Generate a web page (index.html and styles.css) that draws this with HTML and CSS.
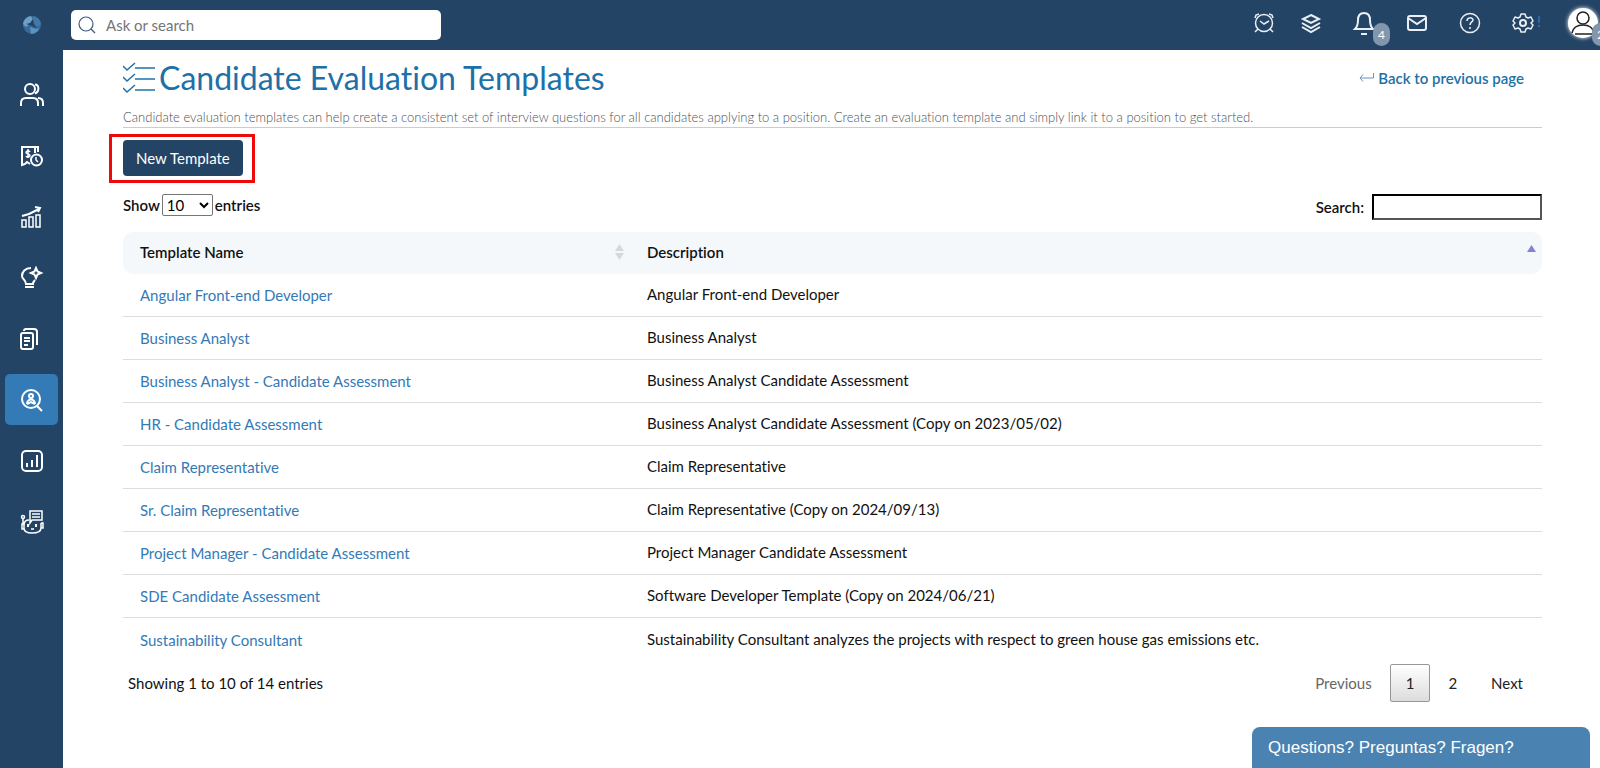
FILE: index.html
```
<!DOCTYPE html>
<html lang="en">

<head>
    <meta charset="UTF-8">
    <meta name="viewport" content="width=device-width, initial-scale=1.0">
    <title>Candidate Evaluation Templates</title>
    <link rel="stylesheet" href="styles.css">
</head>

<body>
    <header class="topbar">
        <a class="logo" href="#" aria-label="Home">
            <svg width="20" height="20" viewBox="0 0 20 20">
                <circle cx="10" cy="10" r="9" fill="#376a9b" />
                <path d="M1 9a9 9 0 0 1 8-8l2 4-3 4-4 3z" fill="#6d9fc8" />
                <path d="M11 1a9 9 0 0 1 8 8l-4 3-4-4z" fill="#4478a6" />
                <path d="M4 9l4-1 3-4 1 5 3 4-5-2z" fill="#244466" />
                <path d="M8 12l6 2 3-1a9 9 0 0 1-8 6z" fill="#5d93bf" />
            </svg>
        </a>
        <form class="ask">
            <svg width="18" height="18" viewBox="0 0 18 18" fill="none" stroke="#3f5a7c" stroke-width="1.2">
                <circle cx="8" cy="8" r="7" />
                <path d="M13 13l4 4" />
            </svg>
            <input class="ask-input" type="text" placeholder="Ask or search" aria-label="Ask or search">
        </form>
        <div class="tools">
            <button class="tool tool-clock" type="button" aria-label="Reminders">
                <svg width="22" height="22" viewBox="0 0 22 22">
                    <circle cx="11" cy="11" r="8.500" />
                    <path d="M7 9l4 3 5-3M2 6l1-3 3-1M20 6l-1-3-3-1M5 17l-3 3M17 17l3 3" />
                </svg>
            </button>
            <button class="tool" type="button" aria-label="Layers">
                <svg width="22" height="22" viewBox="0 0 22 22">
                    <path d="M11 3l8 4-8 4-8-4z" stroke-width="2" />
                    <path d="M2 11l9 5 9-5M2 15l9 5 9-5" stroke-width="2" />
                </svg>
            </button>
            <button class="tool" type="button" aria-label="Notifications, 4 new">
                <svg width="24" height="26" viewBox="0 0 24 26" stroke-width="2">
                    <path d="M3 19h18c-2-2-3-4-3-9 0-4-2-7-6-7s-6 3-6 7c0 5-1 7-3 9z" />
                    <path d="M9 24h6" />
                </svg>
                <span class="badge">4</span>
            </button>
            <button class="tool" type="button" aria-label="Messages">
                <svg width="22" height="22" viewBox="0 0 22 22" stroke-width="2">
                    <rect x="2" y="4" width="18" height="14" rx="2" />
                    <path d="M2 6l9 6 9-6" />
                </svg>
            </button>
            <button class="tool" type="button" aria-label="Help">
                <svg width="22" height="22" viewBox="0 0 22 22">
                    <circle cx="11" cy="11" r="9.500" />
                    <path d="M8 9c0-4 6-4 6-1 0 2-3 2-3 5M11 15v2" />
                </svg>
            </button>
            <button class="tool" type="button" aria-label="Settings">
                <svg width="22" height="22" viewBox="0 0 22 22" stroke-linejoin="round">
                    <path d="M9 2h4l1 3 2 1 3-1 2 4-2 2 2 2-2 4-3-1-2 1-1 3H9l-1-3-2-1-3 1-2-4 2-2-2-2 2-4 3 1 2-1z" />
                    <circle cx="11" cy="11" r="3" stroke-width="2" />
                </svg>
                <span class="alert">!</span>
            </button>
            <button class="avatar" type="button" aria-label="Account">
                <svg width="28" height="28" viewBox="0 0 28 28" fill="none" stroke="#222" stroke-width="1.500">
                    <circle cx="14" cy="9" r="6" />
                    <path d="M3 24c1-5 5-8 11-8s10 3 11 8M6 25h17" />
                </svg>
                <span class="badge badge-account">2</span>
            </button>
        </div>
    </header>

    <div class="layout">
        <nav class="sidebar">
            <a class="side-link" href="#" aria-label="People">
                <svg width="24" height="24" viewBox="0 0 24 24" stroke-width="2">
                    <circle cx="10" cy="6" r="5" />
                    <path d="M1 23v-3c0-3 2-5 5-5h7c3 0 5 2 5 5v3M15 1.500c4 0 5 7 0 9M18 15c3 0 5 2 5 5v3" />
                </svg>
            </a>
            <a class="side-link" href="#" aria-label="Payroll">
                <svg width="24" height="24" viewBox="0 0 24 24">
                    <path d="M10 20l-3-2-2 2-3 1V3h16v5M2 3v17M15 3v6" stroke-width="2" />
                    <path d="M10 8c-1-2-4-1-4 .5s4 1.500 4 3-3 2.500-4 .5M8 5v9" />
                    <circle cx="16.500" cy="16" r="5.500" stroke-width="2" />
                    <path d="M16 13v3l2 2" />
                </svg>
            </a>
            <a class="side-link" href="#" aria-label="Performance">
                <svg width="24" height="24" viewBox="0 0 24 24">
                    <path d="M2 22v-7h4v7zM9 22V12h4v10zM16 22V10h4v12z" />
                    <path d="M2 11l7-2 10-5M15 2l5 1-2 4" stroke-width="2" />
                </svg>
            </a>
            <a class="side-link" href="#" aria-label="Ideas">
                <svg width="24" height="24" viewBox="0 0 24 24" stroke-width="2">
                    <path d="M11 2c-6 0-9 4-9 8 0 3 4 4 4 8h7c0-2 1-3 2-4M5 21h9" />
                    <path d="M16 2l1.500 3.500L21 7l-3.500 1.500L16 12l-1.500-3.500L11 7l3.500-1.500z" />
                </svg>
            </a>
            <a class="side-link" href="#" aria-label="Documents">
                <svg width="24" height="24" viewBox="0 0 24 24">
                    <rect x="1" y="6" width="12" height="16" rx="2" stroke-width="2" />
                    <path d="M4 4c0-1 1-2 2-2h8c2 0 3 1 3 3v13M4 11h6M4 14h6M4 18h4" stroke-width="2" />
                </svg>
            </a>
            <a class="side-link active" href="#" aria-label="Recruitment">
                <svg width="24" height="24" viewBox="0 0 24 24" stroke-width="2">
                    <circle cx="11" cy="11" r="9" />
                    <circle cx="11" cy="8" r="2" />
                    <path d="M7 16c0-6 8-6 8 0M7 16l4-2 4 2M17 18l5 5" />
                </svg>
            </a>
            <a class="side-link" href="#" aria-label="Reports">
                <svg width="24" height="24" viewBox="0 0 24 24" stroke-width="2">
                    <rect x="2" y="2" width="20" height="20" rx="4" />
                    <path d="M7 18v-4M12 18v-7M17 18V6" />
                </svg>
            </a>
            <a class="side-link" href="#" aria-label="Assistant">
                <svg width="26" height="26" viewBox="0 0 26 26">
                    <path d="M11 2h12v9H13l-2 3zM13 5h8M13 8h8" />
                    <circle cx="4" cy="8" r="1.500" />
                    <path d="M4 10v5M10 11c-3 0-5 2-5 5v3c0 4 3 5 8 5s9-1 9-5v-5M5 15H3v5h2M22 14h2v5h-2M12 20h3" />
                    <path d="M9 15v3M17 15v3" stroke-width="2" />
                </svg>
            </a>
        </nav>

        <main class="content">
            <div class="page-head">
                <h1>
                    <svg width="32" height="32" viewBox="0 0 32 32" fill="none" stroke="#2070a8" stroke-width="1.500">
                        <path d="M0 4l4 4 8-7M0 15l4 4 8-7M0 26l4 4 8-7" />
                        <path d="M12 6h20M12 17h20M12 28h20" />
                    </svg>
                    <span>Candidate Evaluation Templates</span>
                </h1>
                <a class="back" href="#">
                    <svg width="15" height="10" viewBox="0 0 15 10" fill="none" stroke="#6d92b8">
                        <path d="M14.500 0v5H1M4 1.500L1 5l3 3.500" />
                    </svg>
                    Back to previous page
                </a>
            </div>
            <p class="intro">Candidate evaluation templates can help create a consistent set of interview questions for all candidates applying to a position. Create an evaluation template and simply link it to a position to get started.</p>

            <div class="actions">
                <button class="new-template" type="button">New Template</button>
                <span class="highlight"></span>
            </div>

            <div class="filters">
                <div class="length">
                    <label for="entries">Show</label>
                    <select id="entries">
                        <option>10</option>
                        <option>25</option>
                        <option>50</option>
                    </select>
                    <span>entries</span>
                </div>
                <div class="search">
                    <label for="search">Search:</label>
                    <input id="search" type="search">
                </div>
            </div>

            <table>
                <thead>
                    <tr>
                        <th class="col-name">
                            <div class="sort">
                                Template Name
                                <svg width="9" height="16" viewBox="0 0 9 16" fill="#d6d9dc">
                                    <path d="M0 7l4.500-7L9 7zM0 9l4.500 7L9 9z" />
                                </svg>
                            </div>
                        </th>
                        <th>
                            <div class="sort">
                                Description
                                <svg width="9" height="16" viewBox="0 0 9 16" fill="#8580d8">
                                    <path d="M0 8l4.500-7L9 8z" />
                                </svg>
                            </div>
                        </th>
                    </tr>
                </thead>
                <tbody>
                    <tr>
                        <td><a href="#">Angular Front-end Developer</a></td>
                        <td>Angular Front-end Developer</td>
                    </tr>
                    <tr>
                        <td><a href="#">Business Analyst</a></td>
                        <td>Business Analyst</td>
                    </tr>
                    <tr>
                        <td><a href="#">Business Analyst - Candidate Assessment</a></td>
                        <td>Business Analyst Candidate Assessment</td>
                    </tr>
                    <tr>
                        <td><a href="#">HR - Candidate Assessment</a></td>
                        <td>Business Analyst Candidate Assessment (Copy on 2023/05/02)</td>
                    </tr>
                    <tr>
                        <td><a href="#">Claim Representative</a></td>
                        <td>Claim Representative</td>
                    </tr>
                    <tr>
                        <td><a href="#">Sr. Claim Representative</a></td>
                        <td>Claim Representative (Copy on 2024/09/13)</td>
                    </tr>
                    <tr>
                        <td><a href="#">Project Manager - Candidate Assessment</a></td>
                        <td>Project Manager Candidate Assessment</td>
                    </tr>
                    <tr>
                        <td><a href="#">SDE Candidate Assessment</a></td>
                        <td>Software Developer Template (Copy on 2024/06/21)</td>
                    </tr>
                    <tr>
                        <td><a href="#">Sustainability Consultant</a></td>
                        <td>Sustainability Consultant analyzes the projects with respect to green house gas emissions etc.</td>
                    </tr>
                </tbody>
            </table>

            <div class="table-foot">
                <span class="info">Showing 1 to 10 of 14 entries</span>
                <div class="pager">
                    <button class="page disabled" type="button">Previous</button>
                    <button class="page current" type="button">1</button>
                    <button class="page" type="button">2</button>
                    <button class="page" type="button">Next</button>
                </div>
            </div>
        </main>
    </div>

    <button class="chat" type="button">Questions? Preguntas? Fragen?</button>
</body>

</html>
```
FILE: styles.css
```
* {
    box-sizing: border-box;
}

body {
    margin: 0;
    min-height: 100vh;
    display: flex;
    flex-direction: column;
    font-family: Lato, sans-serif;
    font-size: 15px;
    line-height: 20px;
    font-variant-ligatures: none;
    color: #111;
    background-color: #fff;
    overflow-x: hidden;
}

button,
input,
select {
    font-family: inherit;
    font-size: inherit;
}

button {
    cursor: pointer;
}

a {
    color: #337ab7;
    text-decoration: none;
}

svg {
    flex: none;
}

/* top bar */
.topbar {
    display: flex;
    align-items: center;
    height: 50px;
    background-color: #244466;
}

.logo {
    display: flex;
    justify-content: center;
    width: 63px;
}

.ask {
    display: flex;
    align-items: center;
    gap: 10px;
    width: 370px;
    height: 30px;
    margin-left: 8px;
    padding: 0 7px;
    background-color: #fff;
    border-radius: 5px;
}

.ask-input {
    flex: 1;
    min-width: 0;
    padding: 0;
    border: 0;
    outline: 0;
}

.ask-input::placeholder {
    color: #757575;
}

.tools {
    display: flex;
    align-items: center;
    height: 50px;
    margin-left: auto;
    padding-bottom: 4px;
}

.tool {
    position: relative;
    display: flex;
    justify-content: center;
    width: 53px;
    padding: 0;
    border: 0;
    background: none;
    fill: none;
    stroke: #e9eff5;
    stroke-width: 1.5;
}

.tool-clock {
    width: 40px;
}

.badge {
    position: absolute;
    left: 36px;
    top: 13px;
    width: 17px;
    height: 23px;
    border-radius: 9px;
    font-size: 12px;
    line-height: 23px;
    text-align: center;
    color: #fff;
    background-color: #8296ad;
}

.alert {
    position: absolute;
    right: 8px;
    top: 0;
    color: #3a78b5;
}

.avatar {
    position: relative;
    display: flex;
    align-items: center;
    justify-content: center;
    width: 30px;
    height: 30px;
    margin: 0 2px 0 19px;
    padding: 0;
    border: 0;
    border-radius: 50%;
    background-color: #fff;
    box-shadow: 0 0 4px #fff;
}

.badge-account {
    left: 24px;
    top: 15px;
}

/* sidebar */
.layout {
    display: flex;
    flex: 1;
}

.sidebar {
    display: flex;
    flex: none;
    flex-direction: column;
    gap: 10px;
    width: 63px;
    padding: 19px 5px;
    background-color: #244466;
}

.side-link {
    display: flex;
    align-items: center;
    justify-content: center;
    height: 51px;
    border-radius: 5px;
    fill: none;
    stroke: #fff;
    stroke-width: 1.5;
}

.side-link.active {
    background-color: #337ab7;
}

/* content */
.content {
    flex: 1;
    min-width: 0;
    padding: 7px 58px 20px 60px;
}

.page-head {
    display: flex;
    align-items: center;
    justify-content: space-between;
    height: 42px;
}

h1 {
    display: flex;
    align-items: center;
    gap: 4px;
    margin: 0;
    font-size: 32px;
    line-height: 40px;
    font-weight: 400;
    color: #2070a8;
}

.back {
    display: flex;
    align-items: center;
    gap: 4px;
    padding-right: 18px;
    font-weight: 600;
    color: #2070a8;
}

.intro {
    margin: 8px 0 12px;
    border-bottom: 1px solid #ccc;
    font-size: 13px;
    font-weight: 300;
    color: #4c5159;
}

.actions {
    position: relative;
    display: flex;
}

.new-template {
    height: 36px;
    padding: 0 13px;
    border: 0;
    border-radius: 4px;
    color: #fff;
    background-color: #244466;
}

/* marker around the new template button */
.highlight {
    position: absolute;
    left: -14px;
    top: -6px;
    width: 146px;
    height: 49px;
    border: 3px solid #ee0a0a;
    pointer-events: none;
}

.filters {
    display: flex;
    justify-content: space-between;
    margin: 18px 0 12px;
    font-weight: 600;
}

.length {
    display: flex;
    align-items: center;
    gap: 2px;
    height: 22px;
}

.length select {
    width: 51px;
    height: 22px;
    padding: 0;
    border: 1px solid #767676;
    border-radius: 2px;
    background-color: #fff;
}

.search {
    display: flex;
    align-items: center;
    gap: 8px;
}

.search input {
    width: 170px;
    height: 26px;
    border: 2px inset #555;
    border-radius: 0;
    background-color: #fff;
}

table {
    width: 100%;
    border-collapse: separate;
    border-spacing: 0;
    table-layout: fixed;
}

th {
    height: 42px;
    padding: 0 6px 2px 17px;
    font-weight: 600;
    text-align: left;
    background-color: #f4f8fb;
}

th:first-child {
    border-radius: 10px 0 0 10px;
}

th:last-child {
    border-radius: 0 10px 10px 0;
}

.col-name {
    width: 507px;
}

.sort {
    display: flex;
    align-items: center;
    justify-content: space-between;
}

td {
    height: 43px;
    padding: 0 17px;
    border-bottom: 1px solid #ddd;
}

td:last-child {
    padding-bottom: 2px;
}

tr:last-child td {
    border-bottom: 0;
}

.table-foot {
    display: flex;
    align-items: center;
    justify-content: space-between;
    height: 38px;
    margin-top: 3px;
    padding: 0 3px 0 5px;
}

.pager {
    display: flex;
    gap: 2px;
}

.page {
    height: 38px;
    padding: 0 15px;
    border: 1px solid transparent;
    border-radius: 2px;
    color: #222;
    background: none;
}

.page.disabled {
    color: #666;
}

.page.current {
    border-color: #979797;
    background: linear-gradient(#fff, #dcdcdc);
}

.chat {
    position: fixed;
    right: 10px;
    bottom: 0;
    width: 338px;
    height: 41px;
    padding: 0 16px;
    border: 0;
    border-radius: 8px 8px 0 0;
    font-family: "Liberation Sans", Arial, sans-serif;
    font-size: 17px;
    text-align: left;
    color: #fff;
    background-color: #4a83b2;
}
```
